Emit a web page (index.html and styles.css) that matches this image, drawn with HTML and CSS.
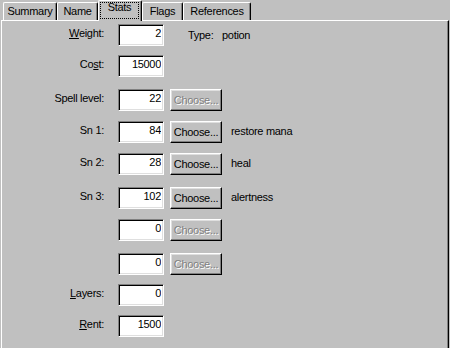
FILE: index.html
```html
<!DOCTYPE html>
<html lang="en">
<head>
<meta charset="utf-8">
<title>Item properties - Stats</title>
<link rel="stylesheet" href="styles.css">
</head>
<body>
<div class="dialog">
  <div class="tabs">
    <div class="tab tab-summary">Summary</div>
    <div class="tab tab-name">Name</div>
    <div class="tab tab-stats is-active"><span class="focus">Stats</span></div>
    <div class="tab tab-flags">Flags</div>
    <div class="tab tab-refs">References</div>
  </div>
  <div class="panel">
    <div class="form">
      <div class="row">
        <label class="label"><u>W</u>eight:</label>
        <input class="edit" type="text" value="2" readonly>
        <span class="type-label">Type:</span>
        <span class="type-value">potion</span>
      </div>
      <div class="row row-cost">
        <label class="label">Co<u>s</u>t:</label>
        <input class="edit" type="text" value="15000" readonly>
      </div>
      <div class="row row-wide">
        <label class="label">Spell level:</label>
        <input class="edit" type="text" value="22" readonly>
        <button class="btn" type="button" disabled>Choose...</button>
      </div>
      <div class="row">
        <label class="label">Sn 1:</label>
        <input class="edit" type="text" value="84" readonly>
        <button class="btn" type="button">Choose...</button>
        <span class="note">restore mana</span>
      </div>
      <div class="row">
        <label class="label">Sn 2:</label>
        <input class="edit" type="text" value="28" readonly>
        <button class="btn" type="button">Choose...</button>
        <span class="note">heal</span>
      </div>
      <div class="row row-wide">
        <label class="label">Sn 3:</label>
        <input class="edit" type="text" value="102" readonly>
        <button class="btn" type="button">Choose...</button>
        <span class="note">alertness</span>
      </div>
      <div class="row">
        <span class="label"></span>
        <input class="edit" type="text" value="0" readonly>
        <button class="btn" type="button" disabled>Choose...</button>
      </div>
      <div class="row row-wide">
        <span class="label"></span>
        <input class="edit" type="text" value="0" readonly>
        <button class="btn" type="button" disabled>Choose...</button>
      </div>
      <div class="row row-tight">
        <label class="label"><u>L</u>ayers:</label>
        <input class="edit" type="text" value="0" readonly>
      </div>
      <div class="row row-tight">
        <label class="label"><u>R</u>ent:</label>
        <input class="edit" type="text" value="1500" readonly>
      </div>
    </div>
  </div>
</div>
</body>
</html>
```
FILE: styles.css
```css
html, body {
  margin: 0;
  padding: 0;
}

body {
  width: 450px;
  height: 348px;
  overflow: hidden;
  background: #c0c0c0;
  color: #000;
  font-family: "Liberation Sans", Arial, sans-serif;
  font-size: 11px;
  letter-spacing: -0.3px;
}

.dialog {
  display: flex;
  flex-direction: column;
}

/* ---- tab strip ---- */
.tabs {
  display: flex;
  align-items: flex-end;
  height: 20px;
  padding-left: 3px;
}

.tab {
  box-sizing: border-box;
  height: 18px;
  padding-top: 2px;
  line-height: 13px;
  text-align: center;
  white-space: nowrap;
  background: #c0c0c0;
  border-left: 1px solid #fff;
  border-top: 1px solid #fff;
  border-right: 1px solid #000;
  border-radius: 2px 2px 0 0;
  box-shadow: inset -1px 0 #808080;
}

.tab-summary { width: 54px; }
.tab-name    { width: 41px; }
.tab-stats   { width: 44px; }
.tab-flags   { width: 41px; }
.tab-refs    { width: 68px; }

.tab.is-active {
  position: relative;
  z-index: 1;
  height: 21px;
  margin-bottom: -1px;
  padding-top: 1px;
}

.focus {
  display: block;
  box-sizing: border-box;
  height: 17px;
  margin: 0 2px 0 1px;
  border: 1px dotted #000;
  line-height: 9px;
}

/* ---- page panel ---- */
.panel {
  box-sizing: border-box;
  width: 448px;
  height: 340px;
  margin-left: 1px;
  border-left: 1px solid #fff;
  border-top: 1px solid #fff;
  border-right: 1px solid #000;
  box-shadow: inset -1px 0 #808080;
}

.form {
  display: flex;
  flex-direction: column;
  gap: 10px;
  padding-top: 3px;
}

.row {
  display: flex;
  align-items: flex-start;
  height: 22px;
}

.row-cost  { margin-top: -1px; }
.row-wide  { margin-top: 2px; }
.row-tight { margin-top: -1px; }

.label {
  flex: none;
  width: 102px;
  margin-right: 14px;
  padding-top: 3px;
  line-height: 13px;
  text-align: right;
  white-space: nowrap;
}

u {
  text-underline-offset: 1px;
}

.edit {
  flex: none;
  box-sizing: border-box;
  width: 46px;
  height: 22px;
  margin: 0;
  padding: 0 2px 5px 0;
  font: inherit;
  letter-spacing: inherit;
  line-height: 13px;
  color: #000;
  text-align: right;
  background: #fff;
  border: 1px solid;
  border-color: #808080 #fff #fff #808080;
  box-shadow: inset 1px 1px #000, inset -1px -1px #dfdfdf;
  outline: none;
}

.btn {
  flex: none;
  box-sizing: border-box;
  width: 52px;
  height: 22px;
  margin: 0 0 0 6px;
  padding: 0;
  font: inherit;
  letter-spacing: inherit;
  line-height: 18px;
  color: #000;
  background: #c0c0c0;
  border: 1px solid;
  border-color: #fff #000 #000 #fff;
  box-shadow: inset -1px -1px #808080, inset 1px 1px #dfdfdf;
  border-radius: 0;
  white-space: nowrap;
}

.btn:disabled {
  color: #808080;
  text-shadow: 1px 1px 0 #fff;
}

.note {
  margin-left: 9px;
  padding-top: 4px;
  line-height: 13px;
  white-space: nowrap;
}

.type-label {
  width: 34px;
  margin-left: 24px;
  padding-top: 5px;
  line-height: 13px;
}

.type-value {
  padding-top: 5px;
  line-height: 13px;
}
```
